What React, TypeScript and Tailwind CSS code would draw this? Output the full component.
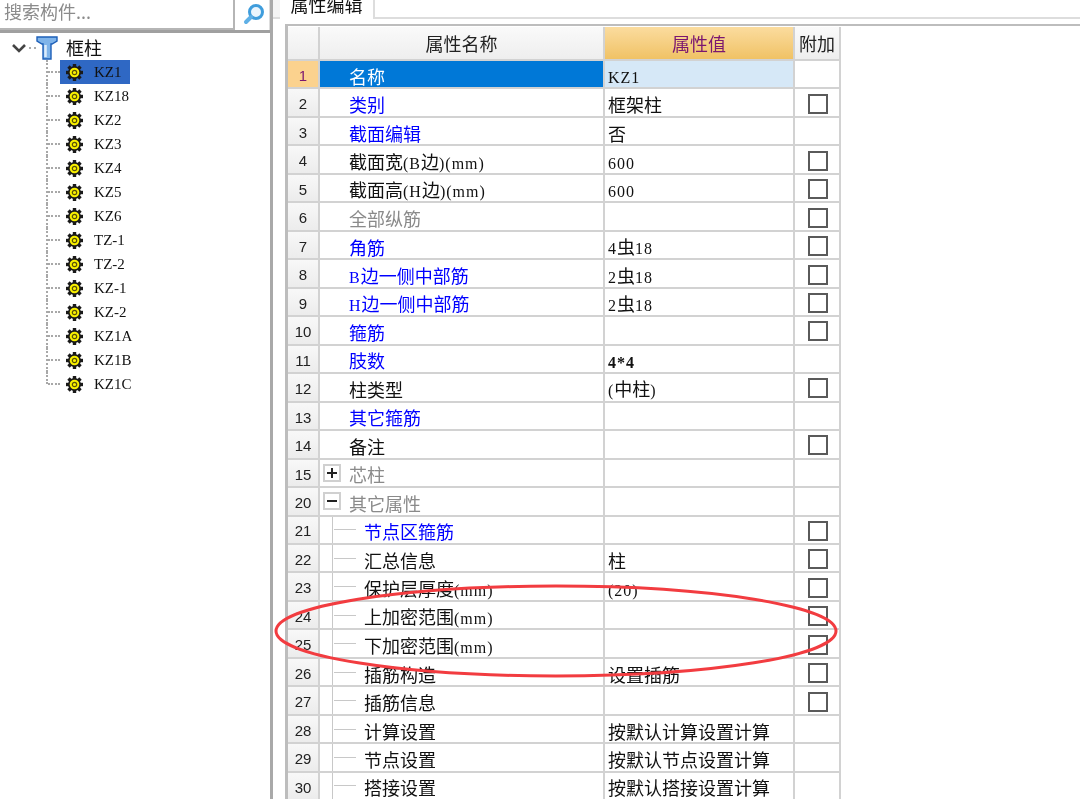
const treeItems = ['KZ1', 'KZ18', 'KZ2', 'KZ3', 'KZ4', 'KZ5', 'KZ6', 'TZ-1', 'TZ-2', 'KZ-1', 'KZ-2', 'KZ1A', 'KZ1B', 'KZ1C']

type Row = {
  no: number
  name: string
  value?: string
  tone?: 'blue' | 'gray'
  check?: boolean
  group?: '+' | '-'
  child?: boolean
  bold?: boolean
}

const rows: Row[] = [
  { no: 1, name: '名称', value: 'KZ1' },
  { no: 2, name: '类别', value: '框架柱', tone: 'blue', check: true },
  { no: 3, name: '截面编辑', value: '否', tone: 'blue' },
  { no: 4, name: '截面宽(B边)(mm)', value: '600', check: true },
  { no: 5, name: '截面高(H边)(mm)', value: '600', check: true },
  { no: 6, name: '全部纵筋', tone: 'gray', check: true },
  { no: 7, name: '角筋', value: '4虫18', tone: 'blue', check: true },
  { no: 8, name: 'B边一侧中部筋', value: '2虫18', tone: 'blue', check: true },
  { no: 9, name: 'H边一侧中部筋', value: '2虫18', tone: 'blue', check: true },
  { no: 10, name: '箍筋', tone: 'blue', check: true },
  { no: 11, name: '肢数', value: '4*4', tone: 'blue', bold: true },
  { no: 12, name: '柱类型', value: '(中柱)', check: true },
  { no: 13, name: '其它箍筋', tone: 'blue' },
  { no: 14, name: '备注', check: true },
  { no: 15, name: '芯柱', tone: 'gray', group: '+' },
  { no: 20, name: '其它属性', tone: 'gray', group: '-' },
  { no: 21, name: '节点区箍筋', tone: 'blue', check: true, child: true },
  { no: 22, name: '汇总信息', value: '柱', check: true, child: true },
  { no: 23, name: '保护层厚度(mm)', value: '(20)', check: true, child: true },
  { no: 24, name: '上加密范围(mm)', check: true, child: true },
  { no: 25, name: '下加密范围(mm)', check: true, child: true },
  { no: 26, name: '插筋构造', value: '设置插筋', check: true, child: true },
  { no: 27, name: '插筋信息', check: true, child: true },
  { no: 28, name: '计算设置', value: '按默认计算设置计算', child: true },
  { no: 29, name: '节点设置', value: '按默认节点设置计算', child: true },
  { no: 30, name: '搭接设置', value: '按默认搭接设置计算', child: true },
]

// cjk runs stay 18px, ascii runs drop to the serif the grid uses
function Txt({ text, bold }: { text: string; bold?: boolean }) {
  const parts = text.split(/([\x00-\x7f]+)/).filter(Boolean)
  return (
    <span className="whitespace-nowrap pt-[4px]">
      {parts.map((p, i) =>
        /^[\x00-\x7f]/.test(p) ? (
          <span key={i} className={`font-['Liberation_Serif',serif] text-[16px] tracking-[1px] ${bold ? 'font-bold' : ''}`}>
            {p}
          </span>
        ) : (
          <span key={i}>{p}</span>
        )
      )}
    </span>
  )
}

function Gear() {
  const teeth = [0, 45, 90, 135]
  return (
    <svg width="17" height="17" viewBox="0 0 17 17" className="shrink-0">
      {teeth.map((a) => (
        <rect key={a} x="6.8" y="0" width="3.4" height="17" fill="#1a1a1a" transform={`rotate(${a} 8.5 8.5)`} />
      ))}
      <circle cx="8.5" cy="8.5" r="6.5" fill="#1a1a1a" />
      <circle cx="8.5" cy="8.5" r="4.8" fill="#f8f000" />
      <circle cx="8.5" cy="8.5" r="2.2" fill="none" stroke="#5a5208" strokeWidth="1.2" />
    </svg>
  )
}

function ColumnIcon() {
  return (
    <svg width="22" height="24" viewBox="0 0 22 24" className="shrink-0">
      <path d="M1 1h20v4l-5 3h-1v15H7V8H6L1 5z" fill="#7fb4ea" stroke="#1d5fb8" strokeWidth="1.4" />
      <path d="M9.5 9v12" stroke="#dcecfb" strokeWidth="2.5" />
    </svg>
  )
}

function Checkbox() {
  return <div className="ml-[2px] mt-[2px] h-[20px] w-[20px] border-2 border-[#5a5a5a] bg-white" />
}

function TreePanel() {
  return (
    <div className="flex w-[273px] shrink-0 flex-col border-r-[3px] border-[#a9a9a9] bg-white">
      <div className="flex h-[33px] shrink-0 border-b-[3px] border-[#a0a0a0]">
        <div className="flex h-full w-[235px] items-center border-b-2 border-r-2 border-[#b5b5b5] pb-[6px] pl-[4px] text-[18px] text-[#8b8b8b]">
          搜索构件...
        </div>
        <div className="flex flex-1 items-center justify-center border-r border-[#dddddd] pb-[3px] pl-[4px]">
          <svg width="22" height="22" viewBox="0 0 22 22">
            <circle cx="13" cy="9" r="6.5" fill="#eaf5fd" stroke="#3f9ddc" strokeWidth="3" />
            <path d="M8 14l-5 5" stroke="#5fb0e6" strokeWidth="4" strokeLinecap="round" />
          </svg>
        </div>
      </div>

      <div className="flex h-[27px] items-center pl-[11px] pt-[2px]">
        <svg width="16" height="10" viewBox="0 0 16 10" className="shrink-0">
          <path d="M2 2l6 6 6-6" fill="none" stroke="#444" strokeWidth="2.6" />
        </svg>
        <div className="ml-[2px] w-[7px] border-t-2 border-dotted border-[#aaa]" />
        <div className="mr-[8px]">
          <ColumnIcon />
        </div>
        <span className="text-[18px] text-[#111]">框柱</span>
      </div>

      <div className="ml-[46px] flex flex-col">
        {treeItems.map((name, i) => (
          <div key={name} className="flex h-[24px] items-center">
            <div className="flex h-full w-[2px] flex-col">
              <div className={`w-[2px] border-l-2 border-dotted border-[#a8a8a8] ${i === treeItems.length - 1 ? 'h-1/2' : 'h-full'}`} />
            </div>
            <div className="w-[12px] border-t-2 border-dotted border-[#a8a8a8]" />
            <div className={`flex h-[24px] items-center pl-[6px] pr-[8px] ${i === 0 ? 'bg-[#2f68c4]' : ''}`}>
              <Gear />
              <span className="ml-[11px] font-['Liberation_Serif',serif] text-[15px] text-[#111]">{name}</span>
            </div>
          </div>
        ))}
      </div>
    </div>
  )
}

function PropRow({ row }: { row: Row }) {
  const selected = row.no === 1
  const nameColor = selected
    ? 'text-white'
    : row.tone === 'blue'
      ? 'text-[#0000ff]'
      : row.tone === 'gray'
        ? 'text-[#8a8a8a]'
        : 'text-[#111]'

  return (
    <div className="flex h-[28.48px] w-[553px] shrink-0 border-b-2 border-[#d2d2d2] text-[18px]">
      <div
        className={`flex w-[32px] shrink-0 items-center justify-center border-r-2 border-[#d2d2d2] pt-[4px] font-['Liberation_Sans',sans-serif] text-[15px] ${
          selected ? 'bg-[#fbd28e] text-[#7a1670]' : 'bg-gradient-to-b from-[#f8f8f8] to-[#ececec] text-[#222]'
        }`}
      >
        {row.no}
      </div>
      <div className={`flex w-[285px] shrink-0 items-center border-r-2 border-[#d2d2d2] ${selected ? 'bg-[#0078d7]' : ''} ${nameColor}`}>
        {row.group && (
          <div className="ml-[3px] mr-[8px] flex h-[18px] w-[18px] items-center justify-center border-2 border-[#d0d0d0] text-[#222]">
            <div className="relative h-[2px] w-[10px] bg-[#222]">
              {row.group === '+' && <div className="absolute left-[4px] top-[-4px] h-[10px] w-[2px] bg-[#222]" />}
            </div>
          </div>
        )}
        {row.child && (
          <>
            <div className="ml-[12px] w-[1px] self-stretch bg-[#c8c8c8]" />
            <div className="ml-[1px] mr-[8px] h-[1px] w-[22px] bg-[#c8c8c8]" />
          </>
        )}
        {!row.group && !row.child && <div className="w-[29px] shrink-0" />}
        <Txt text={row.name} />
      </div>
      <div className={`flex w-[190px] shrink-0 items-center border-r-2 border-[#d2d2d2] pl-[3px] text-[#111] ${selected ? 'bg-[#d6e8f7]' : ''}`}>
        {row.value && <Txt text={row.value} bold={row.bold} />}
      </div>
      <div className="flex w-[46px] shrink-0 items-center justify-center border-r-2 border-[#d2d2d2]">
        {row.check && <Checkbox />}
      </div>
    </div>
  )
}

function PropPanel() {
  return (
    <div className="flex min-w-0 flex-1 flex-col bg-white">
      <div className="flex h-[19px] shrink-0 overflow-hidden">
        <div className="w-[7px] shrink-0 border-b-2 border-[#dddddd] bg-[#f4f4f4]" />
        <div className="flex w-[95px] shrink-0 items-end justify-center border-r-2 border-[#dddddd] pb-[6px] text-[18px] leading-[18px] text-[#111]">
          属性编辑
        </div>
        <div className="flex-1 border-b-2 border-[#dddddd]" />
      </div>
      <div className="ml-[12px] mt-[5px] flex flex-1 flex-col border-l-[3px] border-t-[2px] border-[#bdbdbd]">
        <div className="mt-[1px] flex h-[34px] w-[553px] shrink-0 border-b-2 border-[#d2d2d2] text-[18px] text-[#222]">
          <div className="w-[32px] shrink-0 border-r-2 border-[#d2d2d2] bg-gradient-to-b from-[#fafafa] to-[#eeeeee]" />
          <div className="flex w-[285px] shrink-0 items-center justify-center border-r-2 border-[#d2d2d2] bg-gradient-to-b from-[#fafafa] to-[#eeeeee]">
            属性名称
          </div>
          <div className="flex w-[190px] shrink-0 items-center justify-center border-r-2 border-[#d2d2d2] bg-gradient-to-b from-[#fbdc9e] to-[#f0c264] text-[#7a1670]">
            属性值
          </div>
          <div className="flex w-[46px] shrink-0 items-center justify-center border-r-2 border-[#d2d2d2] bg-gradient-to-b from-[#fafafa] to-[#eeeeee]">
            附加
          </div>
        </div>
        {rows.map((row) => (
          <PropRow key={row.no} row={row} />
        ))}
      </div>
    </div>
  )
}

export default function App() {
  return (
    <div className="relative flex h-[799px] w-[1080px] overflow-hidden bg-white font-['Noto_Sans_CJK_SC',sans-serif] blur-[0.4px]">
      <TreePanel />
      <PropPanel />
      {/* hand drawn red mark over rows 24 and 25 */}
      <svg width="1080" height="799" viewBox="0 0 1080 799" className="pointer-events-none absolute inset-0">
        <ellipse cx="556" cy="631" rx="280" ry="45" fill="none" stroke="#f23c40" strokeWidth="3" />
      </svg>
    </div>
  )
}
